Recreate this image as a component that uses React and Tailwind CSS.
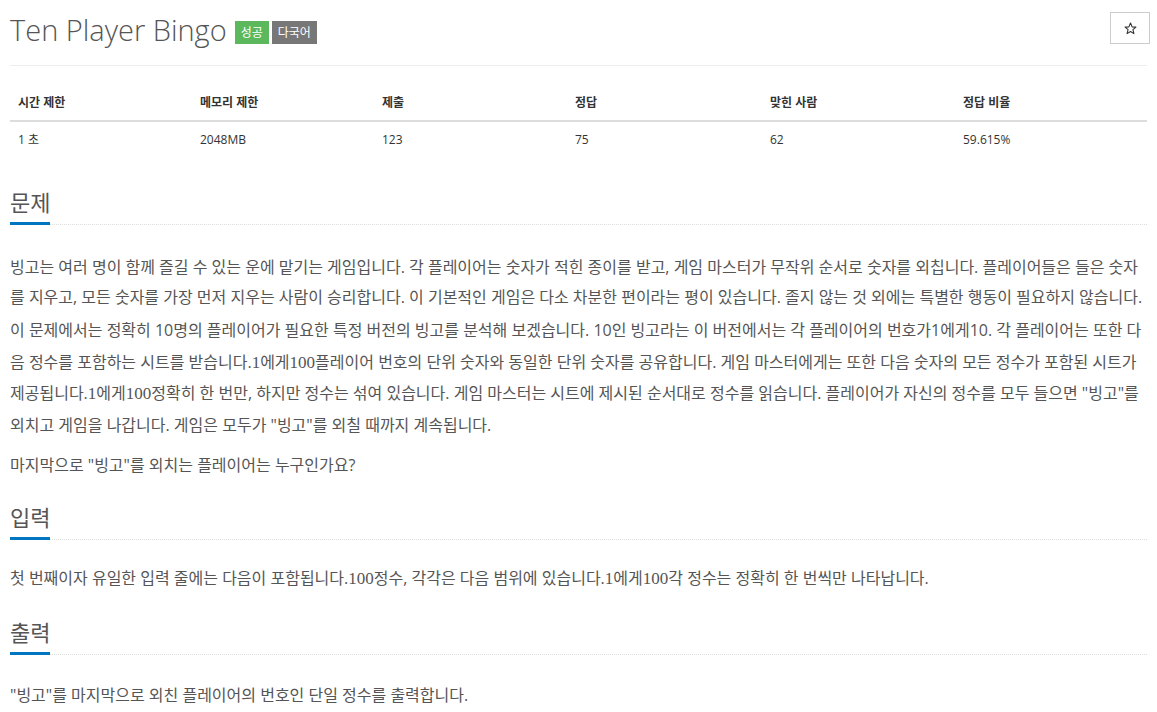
const sans = { fontFamily: '"Open Sans", "Noto Sans CJK KR", sans-serif' }

function Num({ children }) {
  return <span className="font-['Liberation_Serif',serif] text-[17px]">{children}</span>
}

function Headline({ children, className }) {
  return (
    <div className={'border-b border-dotted border-[#ddd] ' + className}>
      <h2 className="inline-block text-[22px] leading-[26px] text-[#555] pb-[7px] border-b-[3px] border-[#0076c0] -mb-px">
        {children}
      </h2>
    </div>
  )
}

const stats = [
  ['시간 제한', '1 초', 'w-[182px]'],
  ['메모리 제한', '2048MB', 'w-[182px]'],
  ['제출', '123', 'w-[193px]'],
  ['정답', '75', 'w-[195px]'],
  ['맞힌 사람', '62', 'w-[193px]'],
  ['정답 비율', '59.615%', ''],
]

export default function App() {
  return (
    <div className="px-[10px] bg-white text-[#555] min-h-[712px]" style={sans}>
      <div className="flex justify-between items-start pt-[10px]">
        <div className="flex items-center gap-[8px]">
          <h1 className="text-[29px] leading-[40px] font-light text-[#555]">Ten Player Bingo</h1>
          <div className="flex gap-[3px] mt-[4px]">
            <span className="bg-[#5cb85c] text-white text-[12px] leading-[23px] px-[6px]">성공</span>
            <span className="bg-[#777] text-white text-[12px] leading-[23px] px-[6px]">다국어</span>
          </div>
        </div>
        <button className="mt-[2px] -mr-[3px] w-[40px] h-[32px] border border-[#ccc] bg-white flex items-center justify-center">
          <svg width="13" height="13" viewBox="0 0 24 24" fill="none" stroke="#333" strokeWidth="2" strokeLinejoin="round">
            <polygon points="12,2 15,9 22,9.5 16.5,14.2 18.3,21.5 12,17.5 5.7,21.5 7.5,14.2 2,9.5 9,9" />
          </svg>
        </button>
      </div>

      <div className="mt-[15px] border-t border-[#eee]" />

      <table className="mt-[19px] w-full text-[12px] text-[#333] border-collapse">
        <thead>
          <tr className="border-b-2 border-[#ddd]">
            {stats.map(([h, , w]) => (
              <th key={h} className={'text-left font-bold px-[8px] py-[8px] leading-[19px] ' + w}>{h}</th>
            ))}
          </tr>
        </thead>
        <tbody>
          <tr>
            {stats.map(([h, v]) => (
              <td key={h} className="px-[8px] py-[8px] leading-[19px]">{v}</td>
            ))}
          </tr>
        </tbody>
      </table>

      <Headline className="mt-[32px]">문제</Headline>

      <div className="text-[16px] whitespace-nowrap">
        <p className="mt-[27px] leading-[30px]">
          빙고는 여러 명이 함께 즐길 수 있는 운에 맡기는 게임입니다. 각 플레이어는 숫자가 적힌 종이를 받고, 게임 마스터가 무작위 순서로 숫자를 외칩니다. 플레이어들은 들은 숫자
          <br />
          를 지우고, 모든 숫자를 가장 먼저 지우는 사람이 승리합니다. 이 기본적인 게임은 다소 차분한 편이라는 평이 있습니다. 졸지 않는 것 외에는 특별한 행동이 필요하지 않습니다.
        </p>
        <p className="mt-[3px] leading-[31.7px]">
          이 문제에서는 정확히 10명의 플레이어가 필요한 특정 버전의 빙고를 분석해 보겠습니다. 10인 빙고라는 이 버전에서는 각 플레이어의 번호가1에게10. 각 플레이어는 또한 다
          <br />
          음 정수를 포함하는 시트를 받습니다.<Num>1</Num>에게<Num>100</Num>플레이어 번호의 단위 숫자와 동일한 단위 숫자를 공유합니다. 게임 마스터에게는 또한 다음 숫자의 모든 정수가 포함된 시트가
          <br />
          제공됩니다.<Num>1</Num>에게<Num>100</Num>정확히 한 번만, 하지만 정수는 섞여 있습니다. 게임 마스터는 시트에 제시된 순서대로 정수를 읽습니다. 플레이어가 자신의 정수를 모두 들으면 "빙고"를
          <br />
          외치고 게임을 나갑니다. 게임은 모두가 "빙고"를 외칠 때까지 계속됩니다.
        </p>
        <p className="mt-[8px] leading-[30px]">마지막으로 "빙고"를 외치는 플레이어는 누구인가요?</p>
      </div>

      <Headline className="mt-[24px]">입력</Headline>
      <p className="mt-[23px] text-[16px] leading-[30px] whitespace-nowrap">
        첫 번째이자 유일한 입력 줄에는 다음이 포함됩니다.<Num>100</Num>정수, 각각은 다음 범위에 있습니다.<Num>1</Num>에게<Num>100</Num>각 정수는 정확히 한 번씩만 나타납니다.
      </p>

      <Headline className="mt-[25px]">출력</Headline>
      <p className="mt-[25px] text-[16px] leading-[30px] whitespace-nowrap">
        "빙고"를 마지막으로 외친 플레이어의 번호인 단일 정수를 출력합니다.
      </p>
    </div>
  )
}
